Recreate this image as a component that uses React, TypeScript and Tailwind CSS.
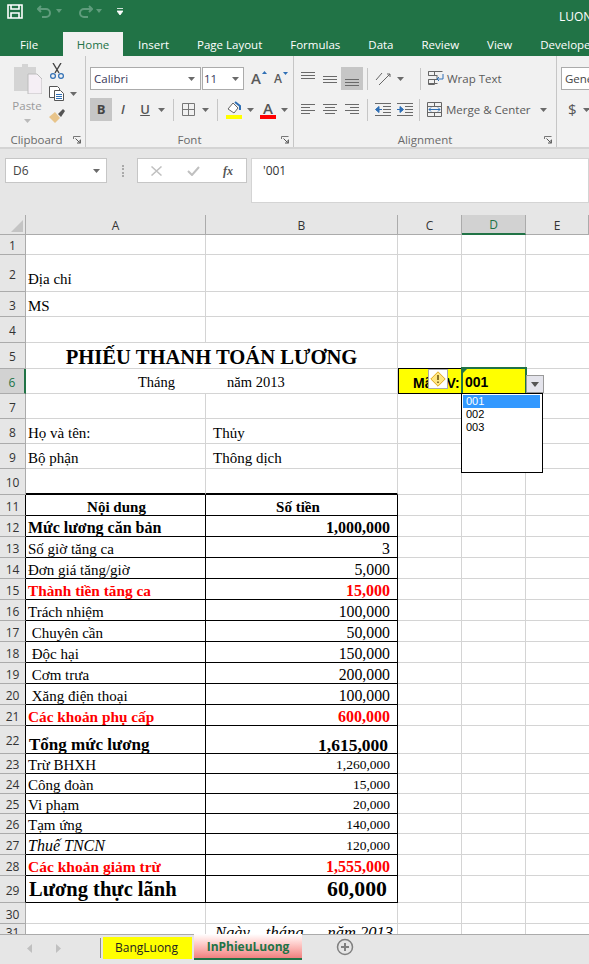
import React from "react";

const ui = "font-['Open_Sans',sans-serif]";
const serif = "font-['Liberation_Serif',serif]";

type Row = {
  n: number;
  h: string;
  a?: string;
  b?: string;
  aCls?: string;
  bCls?: string;
  pad?: string;
  table?: boolean;
  thick?: boolean;
};

const redA = "font-bold text-[#ff0000] text-[15.3px]";
const redB = "font-bold text-[#ff0000] text-[16px]";
const num = "text-[15.8px]";
const small = "text-[15px] leading-[22px]";
const smallNum = "text-[13.5px] leading-[22px]";

const rows: Row[] = [
  { n: 1, h: "h-[20px]" },
  { n: 2, h: "h-[37px]", a: "Địa chỉ", pad: "pt-[12px]" },
  { n: 3, h: "h-[25px]", a: "MS", pad: "pt-[2px]" },
  { n: 4, h: "h-[26px]" },
  { n: 5, h: "h-[26px]" },
  { n: 6, h: "h-[25px]" },
  { n: 7, h: "h-[25px]" },
  { n: 8, h: "h-[25px]", a: "Họ và tên:", b: "Thủy", pad: "pt-[2px]" },
  { n: 9, h: "h-[25px]", a: "Bộ phận", b: "Thông dịch", pad: "pt-[2px]" },
  { n: 10, h: "h-[26px]", thick: true },
  { n: 11, h: "h-[21px]", a: "Nội dung", b: "Số tiền", aCls: "font-bold text-[15px] text-center", bCls: "font-bold text-[15px] !text-center", table: true },
  { n: 12, h: "h-[21px]", a: "Mức lương căn bản", b: "1,000,000", aCls: "font-bold text-[16px]", bCls: "font-bold text-[16px]", table: true },
  { n: 13, h: "h-[21px]", a: "Số giờ tăng ca", b: "3", bCls: num, table: true },
  { n: 14, h: "h-[21px]", a: "Đơn giá tăng/giờ", b: "5,000", bCls: num, table: true },
  { n: 15, h: "h-[21px]", a: "Thành tiền tăng ca", b: "15,000", aCls: redA, bCls: redB, table: true },
  { n: 16, h: "h-[21px]", a: "Trách nhiệm", b: "100,000", bCls: num, table: true },
  { n: 17, h: "h-[21px]", a: "\u00a0Chuyên cần", b: "50,000", bCls: num, table: true },
  { n: 18, h: "h-[21px]", a: "\u00a0Độc hại", b: "150,000", bCls: num, table: true },
  { n: 19, h: "h-[21px]", a: "\u00a0Cơm trưa", b: "200,000", bCls: num, table: true },
  { n: 20, h: "h-[21px]", a: "\u00a0Xăng điện thoại", b: "100,000", bCls: num, table: true },
  { n: 21, h: "h-[21px]", a: "Các khoản phụ cấp", b: "600,000", aCls: redA, bCls: redB, table: true },
  { n: 22, h: "h-[28px]", a: "Tổng mức lương", b: "1,615,000", aCls: "font-bold text-[17px] !pl-[3px]", bCls: "font-bold text-[17.5px] !pr-[9px]", pad: "pt-[7px]", table: true },
  { n: 23, h: "h-[20px]", a: "Trừ BHXH", b: "1,260,000", aCls: small, bCls: smallNum, table: true },
  { n: 24, h: "h-[20px]", a: "Công đoàn", b: "15,000", aCls: small, bCls: smallNum, table: true },
  { n: 25, h: "h-[20px]", a: "Vi phạm", b: "20,000", aCls: small, bCls: smallNum, table: true },
  { n: 26, h: "h-[20px]", a: "Tạm ứng", b: "140,000", aCls: small, bCls: smallNum, table: true },
  { n: 27, h: "h-[21px]", a: "Thuế TNCN", b: "120,000", aCls: "italic text-[16px]", bCls: "text-[13.5px]", table: true },
  { n: 28, h: "h-[21px]", a: "Các khoản giảm trừ", b: "1,555,000", aCls: "font-bold text-[#ff0000] text-[15.5px]", bCls: redB, table: true },
  { n: 29, h: "h-[27px]", a: "Lương thực lãnh", b: "60,000", aCls: "font-bold text-[20.5px] !pl-[3px]", bCls: "font-bold text-[21.8px] !pr-[10px]", pad: "pt-[1px]", table: true },
  { n: 30, h: "h-[21px]" },
];

function Caret({ className = "" }: { className?: string }) {
  return (
    <svg width="7" height="4" viewBox="0 0 7 4" className={`shrink-0 ${className}`}>
      <path d="M0 0h7L3.5 4z" fill="#6a6a6a" />
    </svg>
  );
}

function Launcher() {
  return (
    <svg width="8" height="8" viewBox="0 0 8 8" fill="none" stroke="#777">
      <path d="M.5 3V.5H7.5M7.5 7.5V3.5" />
      <path d="M2.5 2.5L6.5 6.5M7 4v3H4" stroke="#555" />
    </svg>
  );
}

function Lines({ kind }: { kind: "tl" | "ml" | "bl" | "l" | "c" | "r" }) {
  const d: Record<string, string> = {
    tl: "M0 .5h14M0 3.5h14M0 6.5h14",
    ml: "M0 4.5h14M0 7.5h14M0 10.5h14",
    bl: "M0 7.5h14M0 10.5h14M0 13.5h14",
    l: "M0 1.5h14M0 4.5h9M0 7.5h14M0 10.5h9",
    c: "M0 1.5h14M2 4.5h10M0 7.5h14M2 10.5h10",
    r: "M0 1.5h14M5 4.5h9M0 7.5h14M5 10.5h9",
  };
  return (
    <svg width="14" height="14" viewBox="0 0 14 14" stroke="#6a6a6a" fill="none">
      <path d={d[kind]} />
    </svg>
  );
}

function Indent({ flip = false }: { flip?: boolean }) {
  return (
    <svg width="16" height="14" viewBox="0 0 16 14" fill="none">
      <path d="M0 .5h16M8 3.5h8M8 6.5h8M8 9.5h8M0 12.5h16" stroke="#6a6a6a" />
      <path d={flip ? "M0 6.5h5M3 3.5l3.5 3-3.5 3z" : "M7 6.5H2M4 3.5L.5 6.5l3.5 3z"} stroke="#2f6fb5" fill="#2f6fb5" />
    </svg>
  );
}

function Divider({ className = "" }: { className?: string }) {
  return <div className={`w-px h-[22px] bg-[#c6c6c6] shrink-0 ${className}`} />;
}

function GroupLabel({ label, className = "" }: { label: string; className?: string }) {
  return (
    <div className={`absolute left-0 right-0 -bottom-[1px] h-[16px] flex items-center text-[11.5px] text-[#6a6a6a] ${className}`}>
      <span className="flex-1 text-center">{label}</span>
      <span className="absolute right-[4px] top-[4px]">
        <Launcher />
      </span>
    </div>
  );
}

function Clipboard() {
  return (
    <div className="relative w-[86px] h-full shrink-0 border-r border-[#c6c6c6] flex pl-[13px] pt-[7px]">
      <div className="w-[28px] flex flex-col items-center">
        <svg width="29" height="31" viewBox="0 0 29 31" className="shrink-0">
          <path d="M1 4h8V1h6v3h8v24H1z" fill="#d4d4d4" />
          <path d="M15 11h9l5 5v15H15z" fill="#f5eff5" stroke="#bdbdbd" />
        </svg>
        <span className="text-[11.5px] leading-none mt-[6px] text-[#9a9a9a]">Paste</span>
        <Caret className="mt-[7px] opacity-40" />
      </div>
      <div className="ml-[8px] flex flex-col gap-[7px]">
        <svg width="16" height="16" viewBox="0 0 16 16" fill="none">
          <path d="M4 0l6 10M12 0L6 10" stroke="#444" strokeWidth="1.4" />
          <circle cx="4" cy="13" r="2.4" stroke="#2f6fb5" strokeWidth="1.2" />
          <circle cx="12" cy="13" r="2.4" stroke="#2f6fb5" strokeWidth="1.2" />
        </svg>
        <div className="flex items-center gap-[5px]">
          <svg width="16" height="15" viewBox="0 0 16 15" fill="#fff" stroke="#555">
            <path d="M.5.5h8l2 2v9H.5z" />
            <path d="M5.5 4.5h6l3 3v7h-9z" />
            <path d="M7 8.5h6M7 10.5h6M7 12.5h6" stroke="#2f6fb5" />
          </svg>
          <Caret />
        </div>
        <svg width="17" height="15" viewBox="0 0 17 15">
          <path d="M0 9l6-5 5 6-5 5z" fill="#e8c48a" />
          <path d="M9 6l5-5 2 2-4 6z" fill="#555" />
        </svg>
      </div>
      <GroupLabel label="Clipboard" className="pr-[12px]" />
    </div>
  );
}

function FontGroup() {
  return (
    <div className="relative w-[208px] h-full shrink-0 border-r border-[#c6c6c6] pl-[4px] pt-[11px]">
      <div className="flex items-center h-[23px]">
        <div className="w-[111px] h-full bg-white border border-[#ababab] flex items-center justify-between px-[3px] text-[11.5px] text-[#3a3a5a]">
          <span>Calibri</span>
          <Caret className="mr-[2px]" />
        </div>
        <div className="w-[42px] h-full bg-white border border-[#ababab] flex items-center justify-between px-[1px] text-[11.5px] text-[#3a3a5a] ml-[1px]">
          <span>11</span>
          <Caret className="mr-[3px]" />
        </div>
        <div className="relative ml-[7px] w-[14px] text-[#5a5a5a] text-[15px] font-semibold leading-none">
          A
          <svg width="5" height="3" viewBox="0 0 5 3" className="absolute -right-[2px] top-0"><path d="M0 3h5L2.5 0z" fill="#2f6fb5" /></svg>
        </div>
        <div className="relative ml-[9px] w-[12px] text-[#5a5a5a] text-[12px] font-semibold leading-none">
          A
          <svg width="5" height="3" viewBox="0 0 5 3" className="absolute -right-[2px] -top-[1px]"><path d="M0 0h5L2.5 3z" fill="#2f6fb5" /></svg>
        </div>
      </div>
      <div className="flex items-center h-[23px] mt-[8px]">
        <div className="w-[22px] h-full bg-[#c6c6c6] flex items-center justify-center text-[13px] font-bold text-[#444]">B</div>
        <div className="w-[22px] text-center text-[13px] italic font-semibold text-[#555]">I</div>
        <div className="w-[22px] text-center text-[13px] font-semibold underline text-[#555]">U</div>
        <Caret className="ml-[2px]" />
        <Divider className="ml-[8px]" />
        <svg width="14" height="14" viewBox="0 0 14 14" fill="none" stroke="#777" className="ml-[8px]">
          <path d="M.5.5h12v12H.5zM6.5.5v12M.5 6.5h12" />
        </svg>
        <Caret className="ml-[6px]" />
        <Divider className="ml-[8px]" />
        <div className="ml-[7px] w-[17px] flex flex-col items-center">
          <svg width="16" height="14" viewBox="0 0 16 14" fill="#fff" stroke="#666">
            <path d="M2 8l5-6 5 5-4 5z" />
            <path d="M9 1l5 4v4" stroke="#2f6fb5" strokeWidth="2" fill="none" />
          </svg>
          <div className="w-[16px] h-[4px] bg-[#ffff00]" />
        </div>
        <Caret className="ml-[5px]" />
        <div className="ml-[6px] w-[16px] flex flex-col items-center">
          <span className="text-[15px] leading-[14px] font-semibold text-[#555]">A</span>
          <div className="w-[16px] h-[4px] bg-[#ff0000]" />
        </div>
        <Caret className="ml-[5px]" />
      </div>
      <GroupLabel label="Font" />
    </div>
  );
}

function AlignGroup() {
  return (
    <div className="relative w-[263px] h-full shrink-0 border-r border-[#c6c6c6] pl-[7px] pt-[11px] text-[#5a5a5a]">
      <div className="flex items-center h-[23px]">
        <div className="w-[22px]"><Lines kind="tl" /></div>
        <div className="w-[18px]"><Lines kind="ml" /></div>
        <div className="w-[22px] h-full bg-[#c6c6c6] flex items-center justify-center"><Lines kind="bl" /></div>
        <Divider className="ml-[4px]" />
        <svg width="18" height="16" viewBox="0 0 18 16" fill="none" stroke="#666" className="ml-[7px] shrink-0">
          <path d="M1 9l6-7M4 14L15 3M12 3h3v3" />
        </svg>
        <Caret className="ml-[4px]" />
        <Divider className="ml-[16px]" />
        <svg width="16" height="15" viewBox="0 0 16 15" fill="none" className="ml-[7px] shrink-0">
          <path d="M.5.5h14M.5 4.5h9M.5 8.5h9M.5 12.5h9" stroke="#666" />
          <path d="M9 5v4M.5.5h6v4h-6zM.5 8.5h6v5h-6z" stroke="#666" />
          <path d="M15 3v5H9M11 6L9 8l2 2" stroke="#2f6fb5" />
        </svg>
        <span className="ml-[3px] text-[11.5px] whitespace-nowrap">Wrap Text</span>
      </div>
      <div className="flex items-center h-[23px] mt-[8px]">
        <div className="w-[22px]"><Lines kind="l" /></div>
        <div className="w-[22px]"><Lines kind="c" /></div>
        <div className="w-[18px]"><Lines kind="r" /></div>
        <Divider className="ml-[4px]" />
        <div className="ml-[7px]"><Indent /></div>
        <div className="ml-[6px]"><Indent flip /></div>
        <Divider className="ml-[6px]" />
        <svg width="16" height="15" viewBox="0 0 16 15" fill="none" className="ml-[7px] shrink-0">
          <path d="M.5.5h14v14H.5zM.5 4.5h14M.5 10.5h14M7.5.5v4M7.5 10.5v4" stroke="#666" />
          <path d="M2 7.5h11M4 5.5l-2 2 2 2M11 5.5l2 2-2 2" stroke="#2f6fb5" />
        </svg>
        <span className="ml-[3px] text-[11.5px] whitespace-nowrap">Merge &amp; Center</span>
        <Caret className="ml-[9px]" />
      </div>
      <GroupLabel label="Alignment" />
    </div>
  );
}

function Ribbon() {
  return (
    <div className={`h-[93px] bg-[#f1f1f1] border-b-2 border-[#d4d4d4] flex overflow-hidden ${ui} text-[#444]`}>
      <Clipboard />
      <FontGroup />
      <AlignGroup />
      <div className="pl-[4px] pt-[11px] flex-1 min-w-0">
        <div className="h-[23px] bg-white border border-[#ababab] border-r-0 pl-[3px] text-[11.5px] leading-[21px] overflow-hidden">General</div>
        <div className="flex items-center mt-[8px] h-[23px] pl-[7px]">
          <span className="text-[15px] text-[#555]">$</span>
          <Caret className="ml-[6px]" />
        </div>
      </div>
    </div>
  );
}

function TitleAndTabs() {
  const tabs = ["Insert", "Page Layout", "Formulas", "Data", "Review", "View", "Developer"];
  return (
    <div className={`bg-[#217346] h-[56px] flex flex-col text-white ${ui} overflow-hidden`}>
      <div className="h-[32px] flex items-start relative">
        <svg width="16" height="15" viewBox="0 0 16 15" className="ml-[7px] mt-[4px]" fill="none" stroke="#fff" strokeWidth="1.6">
          <path d="M1 1h14v13H1z" />
          <path d="M4 1v4h8V1M4 14V9h8v5" />
        </svg>
        <svg width="15" height="13" viewBox="0 0 15 13" fill="none" stroke="#5f9c7c" strokeWidth="2" className="ml-[14px] mt-[5px]">
          <path d="M1 4h8a4 4 0 0 1 0 8H5M4 1L1 4l3 3" />
        </svg>
        <svg width="6" height="4" viewBox="0 0 6 4" className="ml-[4px] mt-[9px]"><path d="M0 0h6L3 4z" fill="#5f9c7c" /></svg>
        <svg width="15" height="13" viewBox="0 0 15 13" fill="none" stroke="#5f9c7c" strokeWidth="2" className="ml-[16px] mt-[5px]">
          <path d="M14 4H6a4 4 0 0 0 0 8h4M11 1l3 3-3 3" />
        </svg>
        <svg width="6" height="4" viewBox="0 0 6 4" className="ml-[3px] mt-[9px]"><path d="M0 0h6L3 4z" fill="#5f9c7c" /></svg>
        <svg width="6" height="7" viewBox="0 0 6 7" className="ml-[15px] mt-[8px]">
          <path d="M0 .5h6M0 3h6L3 7z" stroke="#fff" fill="#fff" strokeWidth=".8" />
        </svg>
        <span className="absolute left-[559px] top-[8px] text-[12px] whitespace-nowrap">LUONG</span>
      </div>
      <div className="h-[24px] flex text-[11.5px] whitespace-nowrap">
        <div className="w-[63px] shrink-0 pl-[20px] pt-[4px]">File</div>
        <div className="w-[60px] shrink-0 bg-[#f1f1f1] text-[#217346] text-center pt-[4px]">Home</div>
        <div className="flex shrink-0 gap-[28px] ml-[15px] pt-[4px]">
          {tabs.map((t) => (
            <div key={t} className="shrink-0">{t}</div>
          ))}
        </div>
      </div>
    </div>
  );
}

function FormulaBar() {
  return (
    <div className={`h-[66px] bg-[#e6e6e6] flex items-start pt-[9px] ${ui}`}>
      <div className="ml-[5px] w-[102px] h-[25px] bg-white border border-[#c6c6c6] flex items-center justify-between pl-[7px] pr-[6px] text-[12px] text-[#444]">
        <span>D6</span>
        <Caret />
      </div>
      <div className="ml-[15px] w-[2px] h-[12px] mt-[7px] border-l-2 border-dotted border-[#aaaaaa]" />
      <div className="ml-[13px] w-[110px] h-[25px] bg-white border border-[#c6c6c6] flex items-center">
        <svg width="11" height="10" viewBox="0 0 11 10" className="ml-[13px]" stroke="#c0c0c0" strokeWidth="1.5"><path d="M.5.5l10 9M10.5.5l-10 9" /></svg>
        <svg width="13" height="10" viewBox="0 0 13 10" className="ml-[25px]" fill="none" stroke="#c0c0c0" strokeWidth="2"><path d="M1 5l4 4 7-8" /></svg>
        <span className={`ml-[23px] text-[12px] italic font-bold text-[#555] ${serif}`}>fx</span>
      </div>
      <div className="ml-[4px] flex-1 h-[45px] bg-white border border-[#d4d4d4] pl-[11px] pt-[3px] text-[12px] text-[#333]">'001</div>
    </div>
  );
}

function ColumnHeaders() {
  const cols = [
    { l: "A", w: "w-[180px]", on: false },
    { l: "B", w: "w-[192px]", on: false },
    { l: "C", w: "w-[64px]", on: false },
    { l: "D", w: "w-[64px]", on: true },
    { l: "E", w: "flex-1", on: false },
  ];
  return (
    <div className={`h-[20px] flex bg-[#e6e6e6] text-[12px] ${ui} text-[#333]`}>
      <div className="w-[26px] border-r border-b border-[#ababab] flex items-end justify-end p-[2px]">
        <svg width="12" height="12" viewBox="0 0 12 12"><path d="M12 0v12H0z" fill="#c4c4c4" /></svg>
      </div>
      {cols.map((c) => (
        <div
          key={c.l}
          className={`${c.w} flex items-center justify-center pt-[2px] border-r ${
            c.on ? "bg-[#d2d2d2] border-b-2 border-b-[#217346] border-r-[#ababab] text-[#217346]" : "border-b border-[#ababab]"
          }`}
        >
          {c.l}
        </div>
      ))}
    </div>
  );
}

function SheetRow({ r }: { r: Row }) {
  const grid = "border-[#d4d4d4]";
  const line = r.table ? "border-black" : grid;
  const bottom = r.thick ? "border-b-2 border-b-black" : `border-b ${line}`;
  const textCell = `flex items-start ${r.pad ?? ""} ${serif} text-[15px] leading-[24px] text-black`;
  return (
    <div className={`${r.h} flex`}>
      <div
        className={`w-[26px] shrink-0 bg-[#e6e6e6] border-b border-b-[#ababab] border-r flex items-center justify-center pt-[3px] text-[12px] text-[#333] ${ui} ${
          r.table ? "border-r-black" : "border-r-[#ababab]"
        }`}
      >
        {r.n}
      </div>
      <div className={`w-[180px] shrink-0 border-r ${line} ${bottom} ${textCell}`}>
        <span className={`w-full pl-[2px] whitespace-nowrap ${r.aCls ?? ""}`}>{r.a}</span>
      </div>
      <div className={`w-[192px] shrink-0 border-r ${line} ${bottom} ${textCell}`}>
        {r.table ? (
          <span className={`w-full text-right pr-[7px] whitespace-nowrap ${r.bCls ?? ""}`}>{r.b}</span>
        ) : (
          <span className="pl-[7px] whitespace-nowrap">{r.b}</span>
        )}
      </div>
      <div className={`w-[64px] shrink-0 border-r border-b ${grid}`} />
      <div className={`w-[64px] shrink-0 border-r border-b ${grid}`} />
      <div className={`flex-1 border-b ${grid}`} />
    </div>
  );
}

function TitleRow() {
  return (
    <div className="h-[26px] flex">
      <div className={`w-[26px] shrink-0 bg-[#e6e6e6] border-b border-b-[#ababab] border-r border-r-[#ababab] flex items-center justify-center pt-[3px] text-[12px] text-[#333] ${ui}`}>
        5
      </div>
      <div className={`w-[372px] shrink-0 border-r border-b border-[#d4d4d4] flex items-end justify-center ${serif} text-[20.6px] leading-[22px] font-bold text-black whitespace-nowrap`}>
        PHIẾU THANH TOÁN LƯƠNG
      </div>
      <div className="w-[64px] shrink-0 border-r border-b border-[#d4d4d4]" />
      <div className="w-[64px] shrink-0 border-r border-b border-[#d4d4d4]" />
      <div className="flex-1 border-b border-[#d4d4d4]" />
    </div>
  );
}

function CodeRow() {
  return (
    <div className="h-[25px] flex relative">
      <div className={`w-[26px] shrink-0 bg-[#d2d2d2] border-b border-b-[#ababab] border-r-2 border-r-[#217346] flex items-center justify-center pt-[3px] text-[12px] text-[#217346] ${ui}`}>
        6
      </div>
      <div className={`w-[372px] shrink-0 border-r border-b border-[#d4d4d4] flex items-center pt-[4px] ${serif} text-[14.5px] text-black`}>
        <span className="ml-[112px]">Tháng</span>
        <span className="ml-[52px]">năm 2013</span>
      </div>
      <div className="w-[64px] shrink-0 bg-[#ffff00] border border-black -mt-px flex items-center pl-[14px] pt-[4px] font-['Liberation_Sans',sans-serif] text-[14px] font-bold text-black whitespace-nowrap">
        Mã NV:
      </div>
      <div className="w-[64px] shrink-0 bg-[#ffff00] border-b border-white flex items-center pl-[3px] pt-[3px] font-['Liberation_Sans',sans-serif] text-[14px] font-bold text-black">
        001
      </div>
      <div className="flex-1 border-b border-[#d4d4d4]" />

      {/* selection box */}
      <div className="absolute left-[461px] -top-[2px] w-[66px] h-[28px] border-2 border-[#217346] pointer-events-none">
        <div className="absolute left-0 top-0 w-0 h-0 border-t-[4px] border-r-[4px] border-t-[#217346] border-r-transparent" />
      </div>

      {/* error smart tag */}
      <div className="absolute left-[428px] top-0 w-[20px] h-[20px] bg-white border border-[#aaaaaa] flex items-center justify-center">
        <svg width="16" height="16" viewBox="0 0 16 16">
          <path d="M8 .8L15.2 8 8 15.2.8 8z" fill="#ffe680" stroke="#e0a820" />
          <path d="M8 4v5M8 10.5v1.6" stroke="#5a4300" strokeWidth="1.4" />
        </svg>
      </div>

      {/* list arrow */}
      <div className="absolute left-[526px] top-[6px] w-[18px] h-[18px] bg-[#e4e4ec] border border-[#9a9a9a] flex items-center justify-center">
        <svg width="8" height="5" viewBox="0 0 8 5"><path d="M0 0h8L4 5z" fill="#555" /></svg>
      </div>

      {/* list */}
      <div className="absolute left-[461px] top-[24px] w-[82px] h-[80px] z-10 bg-white border border-black font-['Liberation_Sans',sans-serif] text-[11px] leading-[13px] text-black p-px pr-[2px]">
        <div className="bg-[#3399ff] text-white pl-[3px]">001</div>
        <div className="pl-[3px]">002</div>
        <div className="pl-[3px]">003</div>
      </div>
    </div>
  );
}

function LastRow() {
  return (
    <div className="h-[10px] flex overflow-hidden">
      <div className={`w-[26px] shrink-0 bg-[#e6e6e6] border-r border-r-[#ababab] flex justify-center text-[12px] leading-[18px] text-[#333] ${ui}`}>31</div>
      <div className="w-[180px] shrink-0 border-r border-[#d4d4d4]" />
      <div className={`w-[192px] shrink-0 border-r border-[#d4d4d4] pl-[9px] ${serif} italic text-[16.5px] leading-[18px] whitespace-nowrap flex`}>
        <span>Ngày</span>
        <span className="ml-[16px]">tháng</span>
        <span className="ml-[24px]">năm 2013</span>
      </div>
      <div className="w-[64px] shrink-0 border-r border-[#d4d4d4]" />
      <div className="w-[64px] shrink-0 border-r border-[#d4d4d4]" />
    </div>
  );
}

function SheetTabs() {
  return (
    <div className={`h-[30px] bg-[#e6e6e6] border-t border-[#ababab] flex items-start text-[12px] ${ui}`}>
      <svg width="5" height="9" viewBox="0 0 5 9" className="ml-[27px] mt-[9px]"><path d="M5 0v9L0 4.5z" fill="#c0c0c0" /></svg>
      <svg width="5" height="9" viewBox="0 0 5 9" className="ml-[24px] mt-[9px]"><path d="M0 0v9l5-4.5z" fill="#c0c0c0" /></svg>
      <div className="ml-[39px] mt-[3px] w-px h-[20px] bg-[#8a8a8a]" />
      <div className="ml-[2px] mt-[2px] w-[89px] h-[22px] bg-[#ffff00] flex items-center justify-center pr-[2px] text-[#222]">BangLuong</div>
      <div className="ml-[2px] -mt-px w-[108px] h-[26px] bg-gradient-to-b from-white to-[#f08080] border-b-2 border-[#217346] flex items-center justify-center pt-[2px] font-bold text-[#217346]">
        InPhieuLuong
      </div>
      <svg width="18" height="18" viewBox="0 0 18 18" fill="none" stroke="#808080" className="ml-[34px] mt-[3px]">
        <circle cx="9" cy="9" r="7.5" strokeWidth="1.5" />
        <path d="M9 5v8M5 9h8" strokeWidth="2" />
      </svg>
    </div>
  );
}

export default function App() {
  return (
    <div className="w-[589px] h-[964px] overflow-hidden bg-white flex flex-col">
      <TitleAndTabs />
      <Ribbon />
      <FormulaBar />
      <ColumnHeaders />
      {rows.map((r) =>
        r.n === 5 ? <TitleRow key={r.n} /> : r.n === 6 ? <CodeRow key={r.n} /> : <SheetRow key={r.n} r={r} />
      )}
      <LastRow />
      <SheetTabs />
    </div>
  );
}
